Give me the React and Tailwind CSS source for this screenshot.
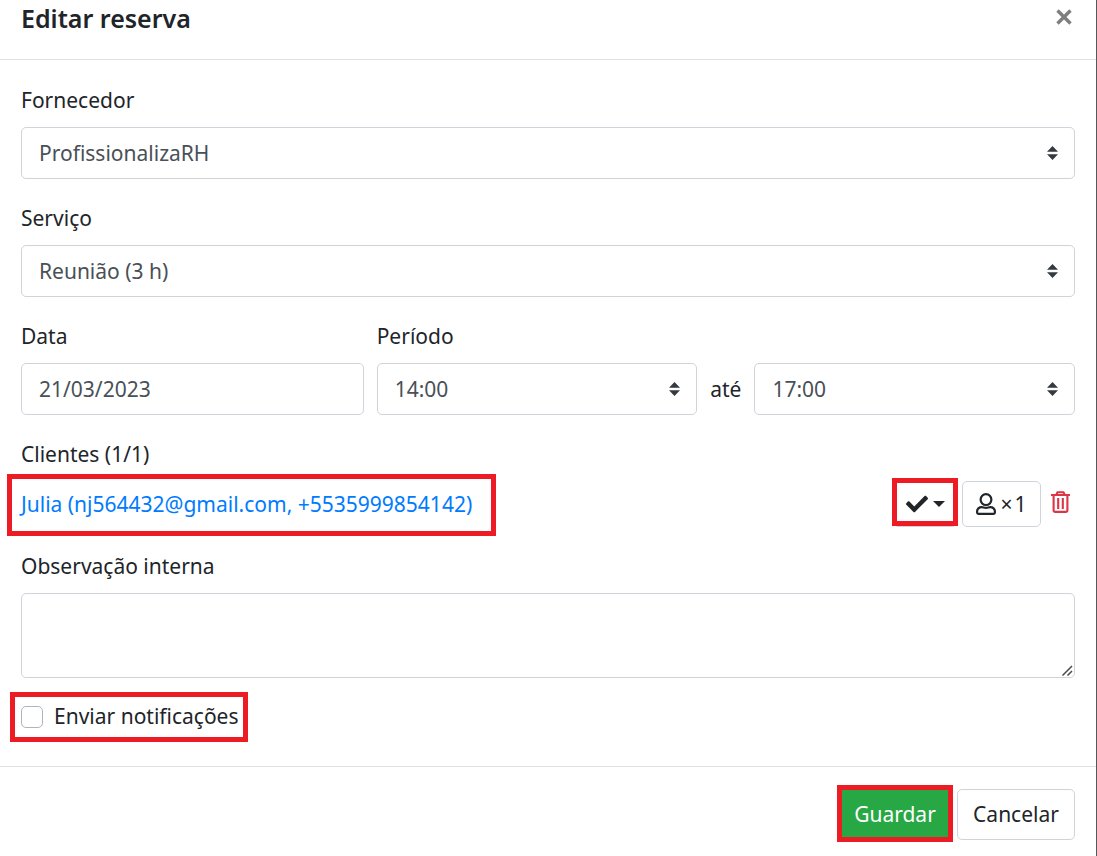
import { FaCheck } from "react-icons/fa";

const control =
  "block w-full h-[52px] appearance-none rounded-[5px] border border-[#ced4da] bg-white px-[17px] text-[21px] leading-[33px] text-[#495057]";

function Field({ label, htmlFor, className = "", children }) {
  return (
    <div className={className}>
      <label htmlFor={htmlFor} className="mb-[10px] block">
        {label}
      </label>
      {children}
    </div>
  );
}

function Select({ id, options, label }) {
  return (
    <div className="relative min-w-0 flex-1">
      <select id={id} aria-label={label} className={control}>
        {options.map((o) => (
          <option key={o}>{o}</option>
        ))}
      </select>
      <svg
        viewBox="0 0 11 14"
        className="pointer-events-none absolute top-[19px] right-[17px] h-[14px] w-[11px] fill-[#343a40]"
        aria-hidden="true"
      >
        <path d="M5.5 0 11 5.7H0zM5.5 14 0 8.3h11z" />
      </svg>
    </div>
  );
}

function Highlight({ className }) {
  return (
    <span
      aria-hidden="true"
      className={`pointer-events-none absolute border-[5px] border-[#ed1c24] ${className}`}
    />
  );
}

function UserIcon() {
  return (
    <svg viewBox="0 0 20 22" className="h-[22px] w-[20px]" fill="none" stroke="#212529" strokeWidth="2.2" aria-hidden="true">
      <circle cx="10" cy="6.6" r="5.4" />
      <path d="M5.800 14.200c-2.800 0-4.700 1.600-4.700 4.200v1.200c0 .8.5 1.300 1.300 1.300h15.200c.8 0 1.300-.5 1.300-1.300v-1.200c0-2.600-1.900-4.200-4.700-4.200-1.400 0-2.400.7-4.200.7s-2.800-.7-4.200-.7z" />
    </svg>
  );
}

function TrashIcon() {
  return (
    <svg viewBox="0 0 19 22" className="h-[22px] w-[19px]" fill="none" stroke="#dc3545" strokeWidth="2.1" aria-hidden="true">
      <path d="M0 4h19M5.200 4 6.500 1.200h6L13.800 4M2.600 4.500v14.700c0 1 .7 1.700 1.700 1.700h10.400c1 0 1.700-.7 1.700-1.700V4.500M7.200 7v11M11.800 7v11" />
    </svg>
  );
}

export default function App() {
  return (
    <div className="min-h-screen border-r border-[#55585b] bg-white font-['Noto_Sans','Open_Sans',sans-serif] text-[21px] leading-[33px] text-[#212529]">
      <header className="flex items-start justify-between border-b border-[#dee2e6] px-[21px] pb-[22px]">
        <h1 className="text-[25px] leading-[37px] font-semibold">Editar reserva</h1>
        <button type="button" aria-label="Fechar" className="mt-[9px] mr-[3px] p-0">
          <svg viewBox="0 0 16 16" className="h-[16px] w-[16px]" stroke="#7f7f7f" strokeWidth="3.4" aria-hidden="true">
            <path d="M1.500 1.500l13 13M14.500 1.500l-13 13" />
          </svg>
        </button>
      </header>

      <form onSubmit={(e) => e.preventDefault()}>
        <div className="px-[21px] pt-6 pb-[33px]">
          <Field label="Fornecedor" htmlFor="provider" className="mb-[23px]">
            <Select id="provider" options={["ProfissionalizaRH"]} />
          </Field>
          <Field label="Serviço" htmlFor="service" className="mb-[23px]">
            <Select id="service" options={["Reunião (3 h)"]} />
          </Field>

          <div className="mb-[23px] grid grid-cols-3 gap-[13px]">
            <Field label="Data" htmlFor="date">
              <input id="date" type="text" defaultValue="21/03/2023" className={control} />
            </Field>
            <Field label="Período" htmlFor="start" className="col-span-2">
              <div className="flex items-center gap-[13px]">
                <Select id="start" options={["14:00"]} />
                <span>até</span>
                <Select id="end" label="Até" options={["17:00"]} />
              </div>
            </Field>
          </div>

          <h2 className="mb-[10px]">Clientes (1/1)</h2>
          <div className="mb-[23px] flex items-center justify-between">
            <a href="#cliente" className="relative text-[#007bff]">
              Julia (nj564432@gmail.com, +5535999854142)
              <Highlight className="-top-[14px] -right-6 -bottom-[15px] -left-[14px]" />
            </a>
            <div className="flex items-center">
              <button
                type="button"
                aria-label="Estado"
                className="relative flex h-[46px] w-[64px] items-center justify-center gap-[5px] rounded-[5px] border border-[#ced4da]"
              >
                <FaCheck className="h-[22px] w-[22px]" />
                <svg viewBox="0 0 12 6" className="h-[6px] w-[12px] fill-[#212529]" aria-hidden="true">
                  <path d="M0 0h12L6 6z" />
                </svg>
                <Highlight className="-top-[4px] -right-[2px] bottom-0 -left-[2px]" />
              </button>
              <button
                type="button"
                className="ml-[5px] flex h-[46px] w-[79px] items-center justify-center gap-1 rounded-[5px] border border-[#ced4da]"
              >
                <UserIcon />
                <span className="flex gap-[2px]">
                  <span>×</span>
                  <span>1</span>
                </span>
              </button>
              <button type="button" aria-label="Remover cliente" className="mr-[5px] mb-1 ml-[10px]">
                <TrashIcon />
              </button>
            </div>
          </div>

          <Field label="Observação interna" htmlFor="note">
            <div className="relative">
              <textarea
                id="note"
                className="block h-[85px] w-full resize-none rounded-[5px] border border-[#ced4da] bg-white px-[17px] py-2 text-[#495057]"
              />
              <svg
                viewBox="0 0 11 11"
                className="pointer-events-none absolute right-[2px] bottom-[2px] h-[11px] w-[11px]"
                stroke="#4a4a4a"
                strokeWidth="1.5"
                aria-hidden="true"
              >
                <path d="M.5 10.500l9.500-9.500M5.500 10.500l4.500-4.500" />
              </svg>
            </div>
          </Field>

          <div className="mt-[22px] flex">
            <label className="relative flex items-center gap-[11px]">
              <input
                type="checkbox"
                className="h-[22px] w-[22px] appearance-none rounded-[5px] border border-[#adb5bd] bg-white checked:bg-[#007bff]"
              />
              Enviar notificações
              <Highlight className="-top-[8px] -right-[9px] -bottom-[9px] -left-[11px]" />
            </label>
          </div>
        </div>

        <footer className="flex items-center justify-end gap-[9px] border-t border-[#dee2e6] px-[21px] pt-[22px] pb-4">
          <button type="submit" className="relative h-[51px] w-[106px] bg-[#28a745] text-white">
            Guardar
            <Highlight className="-top-[4px] -right-[5px] -bottom-[2px] -left-[5px]" />
          </button>
          <button type="button" className="h-[51px] w-[118px] rounded-[5px] border border-[#ced4da] bg-white">
            Cancelar
          </button>
        </footer>
      </form>
    </div>
  );
}
